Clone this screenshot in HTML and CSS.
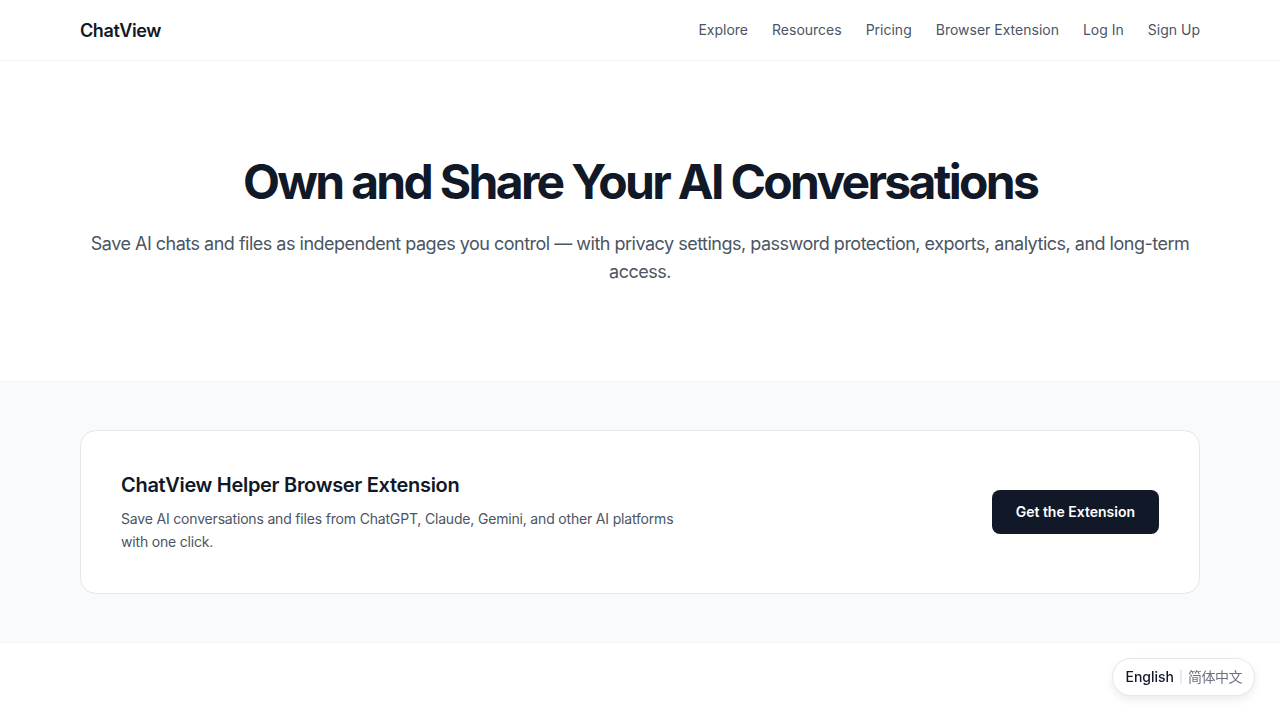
FILE: index.html
```html
<!DOCTYPE html>
<html lang="en">
<head>
  <meta charset="UTF-8">
  <title>ChatView</title>
  <link rel="stylesheet" href="styles.css">
</head>
<body>

  <header class="topbar">
    <div class="container topbar-inner">
      <a class="logo" href="#">ChatView</a>
      <nav class="nav">
        <a href="#">Explore</a>
        <a href="#">Resources</a>
        <a href="#">Pricing</a>
        <a href="#">Browser Extension</a>
        <a href="#">Log In</a>
        <a href="#">Sign Up</a>
      </nav>
    </div>
  </header>

  <section class="hero">
    <div class="container">
      <h1>Own and Share Your AI Conversations</h1>
      <p>Save AI chats and files as independent pages you control — with privacy settings, password protection, exports, analytics, and long-term access.</p>
    </div>
  </section>

  <section class="extension">
    <div class="container">
      <div class="ext-card">
        <div class="ext-text">
          <h2>ChatView Helper Browser Extension</h2>
          <p>Save AI conversations and files from ChatGPT, Claude, Gemini, and other AI platforms with one click.</p>
        </div>
        <a class="btn-dark" href="#">Get the Extension</a>
      </div>
    </div>
  </section>

  <div class="lang-switch">
    <span class="lang-active">English</span>
    <span class="lang-sep">|</span>
    <span class="lang-other">简体中文</span>
  </div>

</body>
</html>
```

FILE: styles.css
```css
* {
  box-sizing: border-box;
}
body {
  margin: 0;
  font-family: Inter, "Noto Sans", "Noto Sans CJK SC", sans-serif;
  color: #111827;
  background-color: #fff;
}
a {
  text-decoration: none;
  color: inherit;
}
.container {
  max-width: 1120px;
  margin: 0 auto;
}

/* header */
.topbar {
  border-bottom: 1px solid #f3f4f6;
}
.topbar-inner {
  height: 60px;
  display: flex;
  align-items: center;
  justify-content: space-between;
}
.logo {
  font-size: 18px;
  font-weight: 600;
  letter-spacing: -0.4px;
  color: #111827;
}
.nav {
  display: flex;
  gap: 24px;
  margin-top: -1px;
}
.nav a {
  font-size: 14px;
  color: #4b5563;
}

/* hero */
.hero {
  padding: 97px 0 95px;
  text-align: center;
}
.hero h1 {
  margin: 0;
  font-size: 48px;
  line-height: 1;
  font-weight: 700;
  letter-spacing: -0.056em;
  color: #111827;
}
.hero p {
  margin: 24px 0 0;
  font-size: 18px;
  line-height: 28px;
  letter-spacing: -0.5px;
  color: #4b5563;
}

/* extension block */
.extension {
  background-color: #f9fafb;
  border-top: 1px solid #f3f4f6;
  border-bottom: 1px solid #f3f4f6;
  padding: 48px 0;
}
.ext-card {
  background-color: #fff;
  border: 1px solid #e5e7eb;
  border-radius: 16px;
  padding: 40px;
  display: flex;
  align-items: center;
  justify-content: space-between;
}
.ext-text h2 {
  margin: 0;
  font-size: 20px;
  line-height: 28px;
  font-weight: 600;
  letter-spacing: -0.3px;
  color: #111827;
}
.ext-text p {
  margin: 8px 0 0;
  max-width: 576px;
  font-size: 14px;
  line-height: 23px;
  letter-spacing: -0.18px;
  color: #4b5563;
}
.btn-dark {
  background-color: #111827;
  color: #fff;
  font-size: 14px;
  font-weight: 600;
  line-height: 20px;
  padding: 12px 24px;
  border-radius: 8px;
}

/* language switch */
.lang-switch {
  position: fixed;
  right: 25px;
  bottom: 24px;
  display: flex;
  align-items: center;
  gap: 5px;
  padding: 9px 12px;
  background-color: #fff;
  border: 1px solid #e5e7eb;
  border-radius: 999px;
  box-shadow: 0 4px 10px rgba(0, 0, 0, 0.08);
  font-size: 14px;
  line-height: 18px;
}
.lang-active {
  color: #111827;
  font-weight: 500;
}
.lang-sep {
  color: #d1d5db;
  font-size: 12px;
}
.lang-other {
  color: #6b7280;
  letter-spacing: -0.5px;
}
```
